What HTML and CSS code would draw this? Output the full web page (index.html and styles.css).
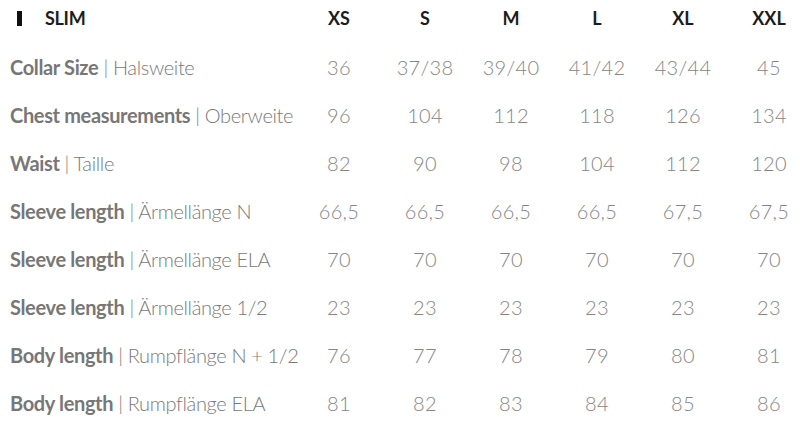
FILE: index.html
```html
<!DOCTYPE html>
<html>
<head>
<meta charset="utf-8">
<link rel="stylesheet" href="styles.css">
</head>
<body>
<div class="chart">
  <div class="row head">
    <div class="label"><span class="bar"></span>SLIM</div>
    <div class="cell">XS</div><div class="cell">S</div><div class="cell">M</div><div class="cell">L</div><div class="cell">XL</div><div class="cell">XXL</div>
  </div>
  <div class="row">
    <div class="label"><b>Collar Size</b> | Halsweite</div>
    <div class="cell">36</div><div class="cell">37/38</div><div class="cell">39/40</div><div class="cell">41/42</div><div class="cell">43/44</div><div class="cell">45</div>
  </div>
  <div class="row">
    <div class="label"><b>Chest measurements</b> | Oberweite</div>
    <div class="cell">96</div><div class="cell">104</div><div class="cell">112</div><div class="cell">118</div><div class="cell">126</div><div class="cell">134</div>
  </div>
  <div class="row">
    <div class="label"><b>Waist</b> | Taille</div>
    <div class="cell">82</div><div class="cell">90</div><div class="cell">98</div><div class="cell">104</div><div class="cell">112</div><div class="cell">120</div>
  </div>
  <div class="row">
    <div class="label"><b>Sleeve length</b> | Ärmellänge N</div>
    <div class="cell">66,5</div><div class="cell">66,5</div><div class="cell">66,5</div><div class="cell">66,5</div><div class="cell">67,5</div><div class="cell">67,5</div>
  </div>
  <div class="row">
    <div class="label"><b>Sleeve length</b> | Ärmellänge ELA</div>
    <div class="cell">70</div><div class="cell">70</div><div class="cell">70</div><div class="cell">70</div><div class="cell">70</div><div class="cell">70</div>
  </div>
  <div class="row">
    <div class="label"><b>Sleeve length</b> | Ärmellänge 1/2</div>
    <div class="cell">23</div><div class="cell">23</div><div class="cell">23</div><div class="cell">23</div><div class="cell">23</div><div class="cell">23</div>
  </div>
  <div class="row">
    <div class="label"><b>Body length</b> | Rumpflänge N + 1/2</div>
    <div class="cell">76</div><div class="cell">77</div><div class="cell">78</div><div class="cell">79</div><div class="cell">80</div><div class="cell">81</div>
  </div>
  <div class="row">
    <div class="label"><b>Body length</b> | Rumpflänge ELA</div>
    <div class="cell">81</div><div class="cell">82</div><div class="cell">83</div><div class="cell">84</div><div class="cell">85</div><div class="cell">86</div>
  </div>
</div>
</body>
</html>
```

FILE: styles.css
```css
html, body {
  margin: 0;
  padding: 0;
  background: #fff;
  overflow: hidden;
}
body {
  width: 800px;
  height: 427px;
}
.chart {
  width: 812px;
  font-family: "Lato", "DejaVu Sans", sans-serif;
}
.row {
  display: grid;
  grid-template-columns: 296px repeat(6, 86px);
  align-items: center;
  height: 48px;
}
.row.head {
  height: 36px;
  margin-bottom: 7px;
  color: #1c1c1c;
  font-weight: 700;
  font-size: 18px;
}
.label {
  padding-left: 10px;
  font-size: 20px;
  font-weight: 300;
  color: #7a7a7a;
  white-space: nowrap;
  letter-spacing: -0.35px;
}
.label b {
  font-weight: 700;
  color: #777777;
}
.head .label {
  color: #1c1c1c;
  font-size: 18px;
  font-weight: 700;
  padding-left: 17px;
  display: flex;
  align-items: center;
  letter-spacing: -0.3px;
}
.bar {
  display: inline-block;
  width: 5px;
  height: 15px;
  background: #111;
  margin-right: 23px;
}
.cell {
  text-align: center;
  font-size: 20px;
  font-weight: 300;
  color: #868686;
  white-space: nowrap;
  letter-spacing: 0.3px;
}
.head .cell {
  font-size: 18px;
  font-weight: 700;
  color: #1c1c1c;
  letter-spacing: 0;
}
```
